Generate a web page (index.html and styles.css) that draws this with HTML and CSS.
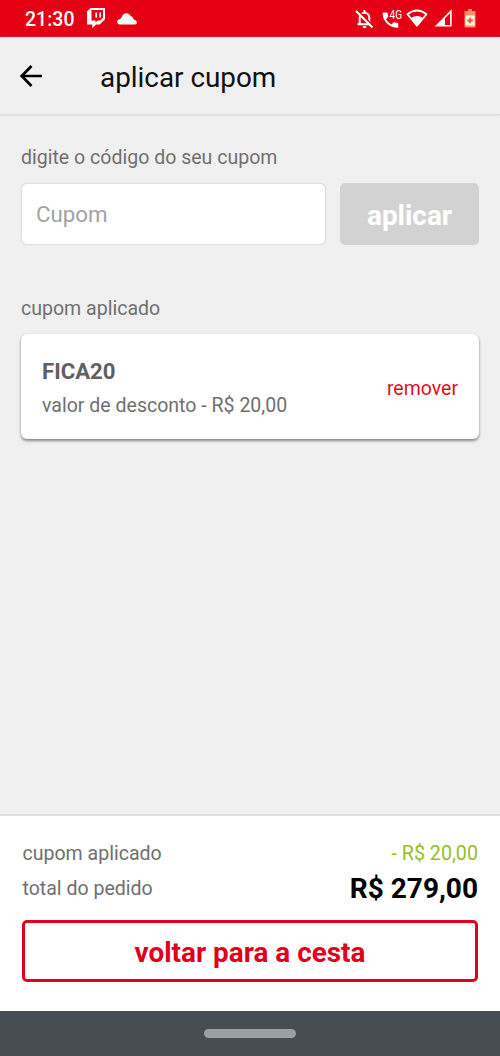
FILE: index.html
```html
<!DOCTYPE html>
<html lang="pt-BR">
<head>
<meta charset="utf-8">
<title>aplicar cupom</title>
<link rel="stylesheet" href="styles.css">
</head>
<body>
<div class="screen">
  <div class="status">
    <span class="clock">21:30</span>
    <svg class="twitch" width="20" height="21" viewBox="0 0 20 21"><path fill="#fff" fill-rule="evenodd" d="M4.500 0H19v11.300L13.700 16.500H10L6.300 20.500V16.500H1V3.500zM5.500 2v10.500H9.500v2L11.600 12.500H14.200L17 9.800V2z"/><path d="M10.200 4.500v5M14.200 4.500v5" stroke="#fff" stroke-width="1.700"/></svg>
    <svg class="cloud" width="21" height="13" viewBox="0 0 21 13"><path fill="#fff" d="M2.800 12.500a2.600 2.600 0 0 1 .2-5.300Q4 6.500 5 4.500A4.800 4.800 0 0 1 13.800 4q2.200.4 2.900 3.500 2.800.5 3.300 2.800.2 2.200-2.200 2.200z"/></svg>
    <div class="system">
      <svg class="bell" width="19" height="20" viewBox="0 0 19 20"><path d="M4.700 15V8.500a4.800 4.800 0 0 1 9.600 0V15M2.500 15.200h14M9.500 1v3" fill="none" stroke="#fff" stroke-width="2"/><path d="M7.500 17.200h4a2 2 0 0 1-4 0z" fill="#fff"/><path d="M2.600 1.200 18 16.800" stroke="#e60014" stroke-width="1.500"/><path d="M1 2 17.500 18.500" stroke="#fff" stroke-width="1.900"/></svg>
      <svg class="call" width="22" height="20" viewBox="0 0 22 20"><path fill="#fff" d="M1.500 3.500h3.300q.7 0 .8.800.1 1.600.6 3 .2.600-.3 1L4 10.200a13 13 0 0 0 5.500 5.300l1.900-2q.5-.5 1.100-.3 1.400.5 3 .6.800.1.800.9v3.100q0 .9-.9.900C7.500 18.500.6 12 .6 4.400q0-.9.900-.9z"/><text class="net" x="7.500" y="9.500" textLength="12.500" lengthAdjust="spacingAndGlyphs">4G</text></svg>
      <svg class="wifi" width="22" height="19" viewBox="0 0 22 19"><path d="M1.500 5.200Q11-2.200 20.500 5.200L11 16.700z" fill="none" stroke="#fff" stroke-width="1.800" stroke-linejoin="round"/><path d="M5 9Q11 5 17 9l-6 8z" fill="#fff"/></svg>
      <svg class="signal" width="19" height="19" viewBox="0 0 19 19"><path d="M2.500 16.700 16.900 2.300v14.400z" fill="none" stroke="#fff" stroke-width="1.600"/><path d="M2 17 11 8v9z" fill="#fff"/></svg>
      <svg class="battery" width="12" height="19" viewBox="0 0 12 19"><path fill="#ff9063" d="M4 0h4v2h2.500q1 0 1 1v14.500q0 1-1 1h-9q-1 0-1-1V3q0-1 1-1H4z"/><path fill="#fff1dc" d="M1.300 6.500h9.400v10H1.300z"/><path d="M6 8.700v5.600M3.200 11.500h5.600" stroke="#f35b2b" stroke-width="1.800"/></svg>
    </div>
  </div>
  <header class="bar">
    <svg width="24" height="24" viewBox="0 0 24 24"><path d="M12.500 2 2.700 12l9.800 10M3 12h20" fill="none" stroke="#000" stroke-width="2.700"/></svg>
    <h1>aplicar cupom</h1>
  </header>
  <main>
    <label class="caption" for="code">digite o código do seu cupom</label>
    <div class="entry">
      <input id="code" type="text" placeholder="Cupom">
      <button class="apply">aplicar</button>
    </div>
    <p class="caption applied">cupom aplicado</p>
    <div class="card">
      <div><strong>FICA20</strong><p class="caption">valor de desconto - R$ 20,00</p></div>
      <a class="remove">remover</a>
    </div>
  </main>
  <footer>
    <div class="row"><span class="caption">cupom aplicado</span><span class="discount">- R$ 20,00</span></div>
    <div class="row"><span class="caption">total do pedido</span><span class="total">R$ 279,00</span></div>
    <button class="back">voltar para a cesta</button>
  </footer>
  <nav><span class="pill"></span></nav>
</div>
</body>
</html>
```
FILE: styles.css
```css
* { box-sizing: border-box; margin: 0; padding: 0; }
body { font-family: Roboto, "Liberation Sans", sans-serif; background: #f0f0f0; }
.screen { width: 500px; height: 1056px; display: flex; flex-direction: column; overflow: hidden; }
svg { display: block; flex: none; }
.status { height: 37px; background: #e60014; display: flex; align-items: center; padding: 0 24px 0 25px; flex: none; }
.clock { color: #fff; font-size: 19.500px; font-weight: 500; width: 61px; line-height: 37px; padding-top: 1px; }
.cloud { margin-left: 11px; }
.system { margin-left: auto; display: flex; align-items: center; }
.call { margin-left: 8px; }
.net { font: 400 12px Roboto, sans-serif; fill: #fff; }
.wifi { margin-left: 2px; }
.signal { margin-left: 6px; }
.battery { margin-left: 11px; }
.bar { height: 78px; display: flex; align-items: center; padding: 0 19px; flex: none; border-bottom: 1px solid #dedede; box-shadow: 0 1px 2px #ddd; }
h1 { font-size: 27.850px; font-weight: 400; color: #111; margin-left: 57px; line-height: 32px; padding-top: 4px; }
main { flex: 1; padding: 31px 21px 0; }
.caption { display: block; font-size: 19.550px; line-height: 24px; color: #707070; }
.entry { display: flex; gap: 14px; margin-top: 13px; }
input { width: 305px; height: 62px; border: 1.500px solid #ddd; border-radius: 6px; padding: 0 14px; background: #fff; font: 22.300px Roboto, sans-serif; box-shadow: 0 0 1px #ccc; }
input::placeholder { color: #a2a2a2; opacity: 1; }
.apply { flex: 1; border: 0; border-radius: 5px; background: #d2d2d2; color: #fff; font: 700 27.900px Roboto, sans-serif; padding-top: 3px; }
.applied { margin-top: 52px; }
.card { height: 105px; margin-top: 13px; background: #fff; border-radius: 6px; box-shadow: 0 2px 3px #888, 0 0 1px #bbb; display: flex; justify-content: space-between; align-items: center; padding: 3px 21px 0; }
.card strong { display: block; font-size: 22.200px; line-height: 27px; color: #606060; font-weight: 700; }
.card .caption { margin-top: 9px; }
.remove { font-size: 19.500px; color: #df101d; }
footer { height: 197px; flex: none; background: #fff; border-top: 2px solid #dfdfdf; padding: 20px 22px 0; }
.row { display: flex; justify-content: space-between; align-items: center; height: 35px; padding-left: 0.500px; }
.discount { font-size: 19.700px; color: #94c11f; }
.total { font-size: 28px; font-weight: 700; color: #000; }
.back { display: block; width: 456px; height: 62px; margin-top: 14px; border: 3px solid #e0001b; border-radius: 5px; background: #fff; color: #e0001b; font: 700 27.900px Roboto, sans-serif; padding-top: 3px; }
nav { height: 45px; background: #464e54; display: flex; align-items: center; justify-content: center; flex: none; }
.pill { width: 92px; height: 9px; border-radius: 5px; background: #9a9fa3; }
```
